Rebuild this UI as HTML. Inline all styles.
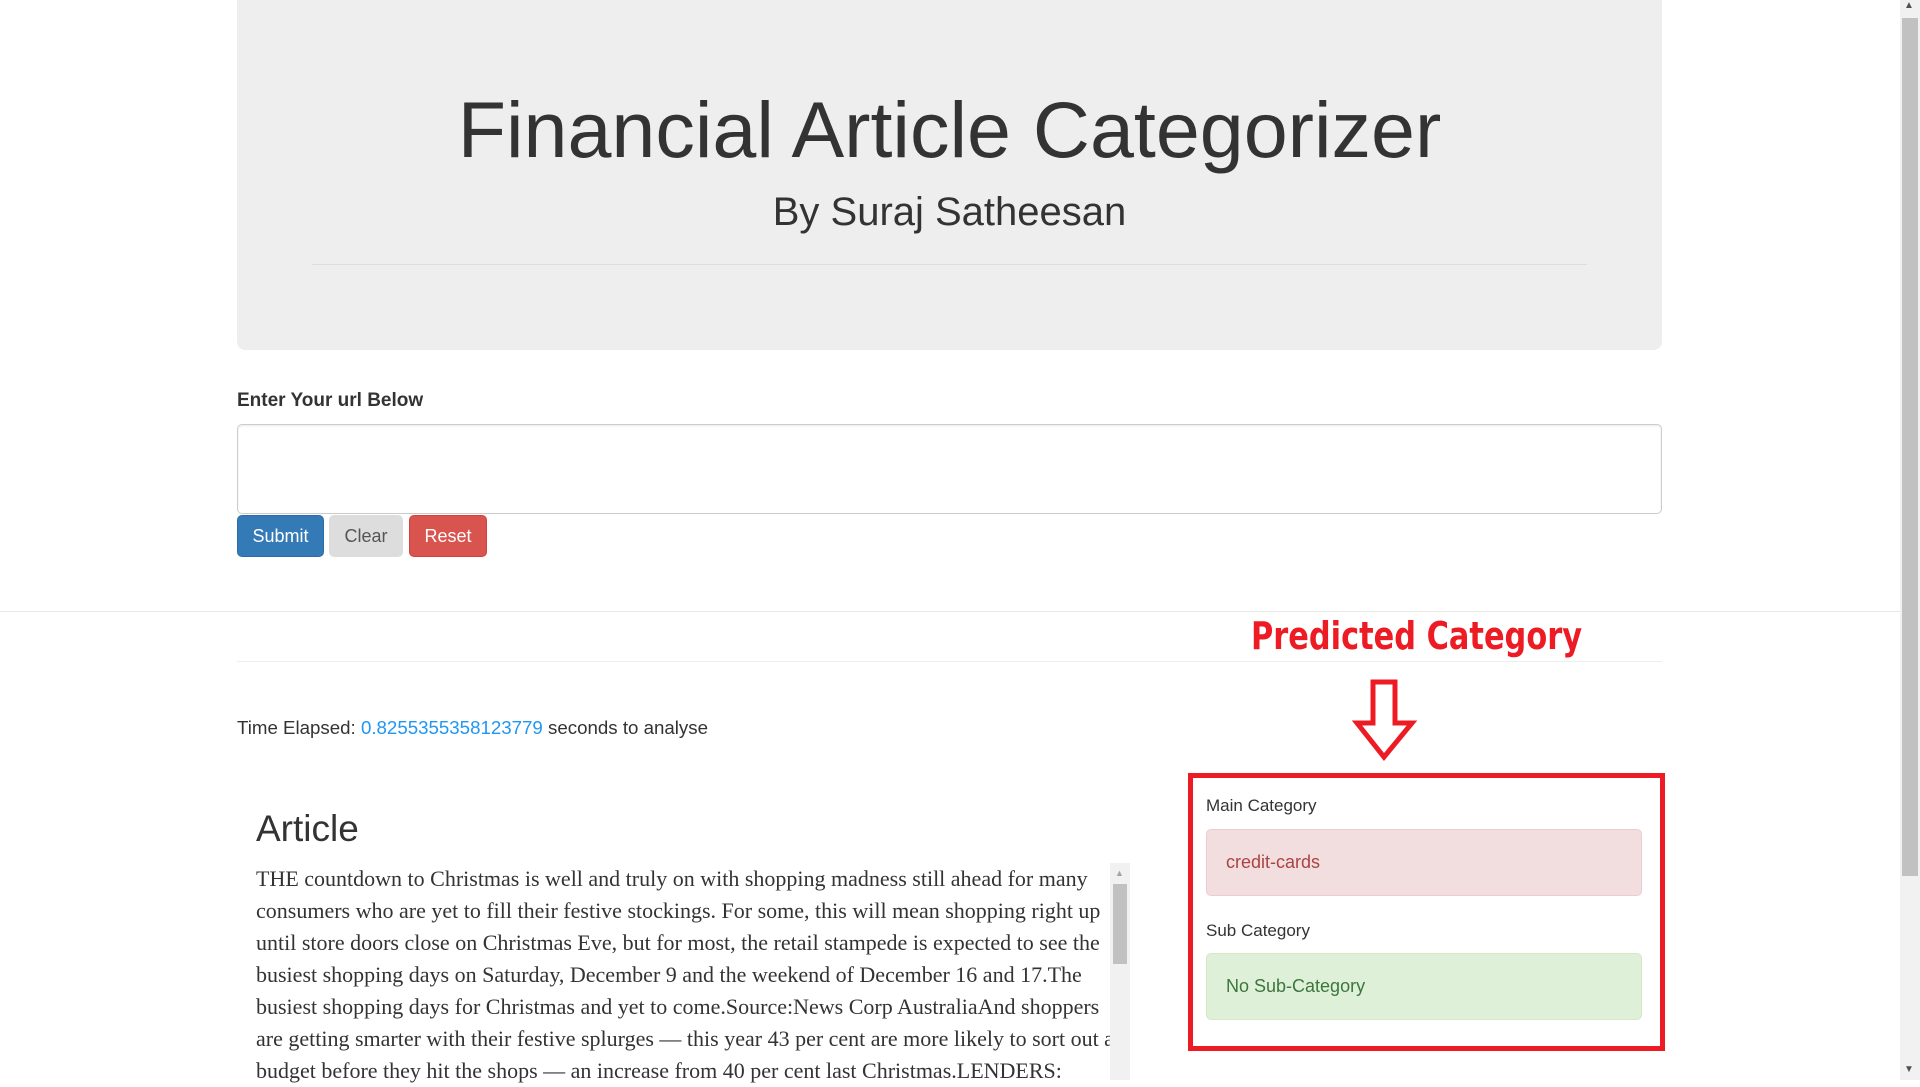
<!DOCTYPE html>
<html><head><meta charset="utf-8"><style>
*{box-sizing:border-box;margin:0;padding:0}
body{width:1920px;height:1080px;overflow:hidden;background:#fff;font-family:"Liberation Sans",sans-serif;color:#333;position:relative}
.abs{position:absolute}
.jumbo{left:237px;top:0;width:1425px;height:350px;background:#eee;border-radius:0 0 8px 8px}
h1{position:absolute;left:0;width:100%;text-align:center;top:90px;font-size:79px;font-weight:400;color:#333;line-height:1}
.sub{position:absolute;left:0;width:100%;text-align:center;top:192px;font-size:40px;color:#333;line-height:1}
.hr1{left:312px;top:264px;width:1275px;height:1px;background:#ddd}
.btn{position:absolute;top:515px;height:42px;border-radius:5px;font-size:18px;line-height:40px;text-align:center;border:1px solid}
.art{left:256px;font-family:"Liberation Serif",serif;font-size:22px;line-height:32px;color:#333;white-space:nowrap}
</style></head><body>
<div class="abs jumbo">
<h1>Financial Article Categorizer</h1>
<div class="sub">By Suraj Satheesan</div>
</div>
<div class="abs hr1"></div>
<div class="abs" style="left:237px;top:390px;font-size:19px;font-weight:bold">Enter Your url Below</div>
<div class="abs" style="left:237px;top:424px;width:1425px;height:90px;border:1px solid #ccc;border-radius:5px;box-shadow:inset 0 1px 2px rgba(0,0,0,.08)"></div>
<div class="btn" style="left:237px;width:87px;background:#337ab7;border-color:#2e6da4;color:#fff">Submit</div>
<div class="btn" style="left:329px;width:74px;background:#ddd;border-color:#ddd;color:#555">Clear</div>
<div class="btn" style="left:409px;width:78px;background:#d9534f;border-color:#d43f3a;color:#fff">Reset</div>
<div class="abs" style="left:0;top:611px;width:1900px;height:1px;background:#e8e8e8"></div>
<div class="abs" style="left:237px;top:661px;width:1425px;height:1px;background:#eee"></div>
<div class="abs" style="left:1251px;top:614px;font-family:'Comic Sans MS','DejaVu Sans',sans-serif;font-weight:bold;font-size:38px;color:#ed1c24;transform:scaleX(0.8);transform-origin:left top;white-space:nowrap">Predicted Category</div>
<svg class="abs" style="left:1352px;top:678px" width="76" height="84" viewBox="0 0 76 84"><path d="M21 4H43V45H60L32 79L5 45H21Z" fill="none" stroke="#ed1c24" stroke-width="5" stroke-linejoin="miter"/></svg>
<div class="abs" style="left:237px;top:717px;font-size:18.7px">Time Elapsed: <span style="color:#2196f3">0.8255355358123779</span> seconds to analyse</div>
<div class="abs" style="left:1188px;top:773px;width:477px;height:278px;border:5px solid #ed1c24"></div>
<div class="abs" style="left:1206px;top:796px;font-size:17px">Main Category</div>
<div class="abs" style="left:1206px;top:829px;width:436px;height:67px;background:#f2dede;border:1px solid #ebccd1;border-radius:5px;color:#a94442;font-size:18px;line-height:65px;padding-left:19px">credit-cards</div>
<div class="abs" style="left:1206px;top:921px;font-size:17px">Sub Category</div>
<div class="abs" style="left:1206px;top:953px;width:436px;height:67px;background:#dff0d8;border:1px solid #d6e9c6;border-radius:5px;color:#3c763d;font-size:18px;line-height:65px;padding-left:19px">No Sub-Category</div>
<div class="abs" style="left:256px;top:808px;font-size:37px;color:#333">Article</div>
<div class="abs art" style="top:863px">THE countdown to Christmas is well and truly on with shopping madness still ahead for many<br>consumers who are yet to fill their festive stockings. For some, this will mean shopping right up<br>until store doors close on Christmas Eve, but for most, the retail stampede is expected to see the<br>busiest shopping days on Saturday, December 9 and the weekend of December 16 and 17.The<br>busiest shopping days for Christmas and yet to come.Source:News Corp AustraliaAnd shoppers<br>are getting smarter with their festive splurges — this year 43 per cent are more likely to sort out a<br>budget before they hit the shops — an increase from 40 per cent last Christmas.LENDERS:</div>
<div class="abs" style="left:1110px;top:863px;width:20px;height:217px;background:#f1f1f1"></div>
<div class="abs" style="left:1113px;top:884px;width:14px;height:80px;background:#c1c1c1"></div>
<div class="abs" style="left:1115px;top:868px;font-size:9px;color:#a3a3a3">▲</div>
<div class="abs" style="left:1900px;top:0;width:20px;height:1080px;background:#f1f1f1"></div>
<div class="abs" style="left:1902px;top:18px;width:16px;height:858px;background:#c1c1c1"></div>
<div class="abs" style="left:1904px;top:0;font-size:10px;color:#505050">▲</div>
<div class="abs" style="left:1904px;top:1064px;font-size:10px;color:#505050">▼</div>
</body></html>
